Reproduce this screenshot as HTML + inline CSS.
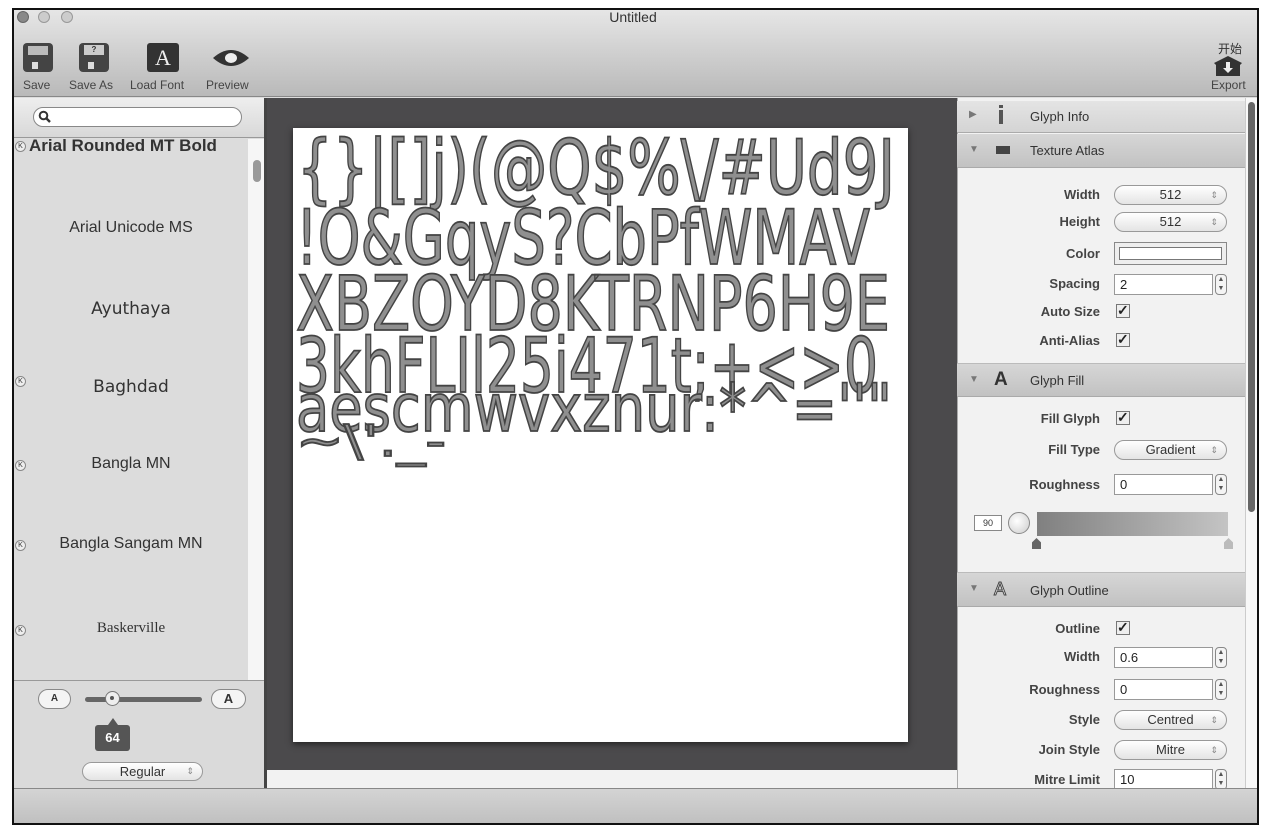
<!DOCTYPE html>
<html><head><meta charset="utf-8"><style>
*{margin:0;padding:0;box-sizing:border-box}
body{width:1266px;height:831px;background:#fff;position:relative;overflow:hidden;font-family:"Liberation Sans",sans-serif;color:#333}
.a{position:absolute}
.win{left:12px;top:8px;width:1247px;height:817px;border:2px solid #111;background:#ddd;overflow:hidden}
.lbl{position:absolute;right:166px;font-size:13px;font-weight:bold;color:#444;text-align:right;white-space:nowrap}
.fld{position:absolute;left:1114px;width:99px;height:21px;background:#fff;border:1px solid #999;font-size:13px;padding:2px 5px;color:#222}
.step{position:absolute;left:1215px;width:12px;height:21px;border:1px solid #888;border-radius:4px;background:#f4f4f4;font-size:7px;line-height:9px;text-align:center;color:#555}
.pop{position:absolute;left:1114px;width:113px;height:20px;border:1px solid #999;border-radius:10px;background:linear-gradient(#fff,#e4e4e4);font-size:13px;text-align:center;line-height:18px;color:#333}
.pop i{position:absolute;right:8px;font-style:normal;font-size:9px;color:#888}
.chk{position:absolute;left:1116px;width:14px;height:14px;border:1px solid #777;background:#eee;font-size:14px;line-height:10px;color:#222;font-weight:bold}
.hdr{position:absolute;left:957px;width:288px;background:linear-gradient(#d6d6d6,#c2c2c2);border-bottom:1px solid #aaa;font-size:13px;color:#333}
.font{position:absolute;left:14px;width:234px;text-align:center;color:#333}
.k{position:absolute;left:15px;width:11px;height:11px;border:1px solid #888;border-radius:50%;font-size:7px;line-height:9px;text-align:center;background:#eee}
</style></head><body>
<div class="a win"></div>
<div class="a" style="left:14px;top:10px;width:1243px;height:87px;background:linear-gradient(#e6e6e6,#b9b9b9);border-bottom:1px solid #888"></div>
<div class="a" style="left:17px;top:11px;width:12px;height:12px;border-radius:50%;background:#888;border:1px solid #666"></div>
<div class="a" style="left:38px;top:11px;width:12px;height:12px;border-radius:50%;background:#ccc;border:1px solid #999"></div>
<div class="a" style="left:61px;top:11px;width:12px;height:12px;border-radius:50%;background:#ccc;border:1px solid #999"></div>
<div class="a" style="left:0;top:9px;width:1266px;text-align:center;font-size:14px;color:#333">Untitled</div>
<div class="a" style="left:23px;top:43px;width:30px;height:29px;background:#444;border-radius:4px"><div class="a" style="left:5px;top:3px;width:20px;height:9px;background:#bbb"></div><div class="a" style="left:9px;top:19px;width:6px;height:7px;background:#ddd"></div></div>
<div class="a" style="left:79px;top:43px;width:30px;height:29px;background:#444;border-radius:4px"><div class="a" style="left:5px;top:2px;width:20px;height:10px;background:#ccc;font-size:8px;text-align:center;font-weight:bold;line-height:10px">?</div><div class="a" style="left:9px;top:19px;width:6px;height:7px;background:#ddd"></div></div>
<div class="a" style="left:147px;top:43px;width:32px;height:29px;background:#333;border-radius:3px;color:#eee;font-family:'Liberation Serif',serif;font-size:22px;text-align:center;line-height:29px">A</div>
<svg class="a" style="left:211px;top:46px" width="40" height="24"><path d="M2 12 Q20 -4 38 12 Q20 28 2 12Z" fill="#333"/><ellipse cx="20" cy="12" rx="6" ry="5" fill="#eee"/></svg>
<div class="a" style="left:23px;top:78px;font-size:12px;color:#444">Save</div>
<div class="a" style="left:69px;top:78px;font-size:12px;color:#444">Save As</div>
<div class="a" style="left:130px;top:78px;font-size:12px;color:#444">Load Font</div>
<div class="a" style="left:206px;top:78px;font-size:12px;color:#444">Preview</div>
<div class="a" style="left:1218px;top:40px;font-size:12px;color:#333;font-family:'Noto Sans CJK SC',sans-serif">开始</div>
<svg class="a" style="left:1213px;top:55px" width="30" height="22"><path d="M1 8 L15 1 L29 8 L27 10 L27 21 L3 21 L3 10Z" fill="#333"/><path d="M13 7 h4 v6 h3 l-5 5 l-5 -5 h3z" fill="#eee"/></svg>
<div class="a" style="left:1211px;top:78px;font-size:12px;color:#444">Export</div>
<div class="a" style="left:14px;top:98px;width:251px;height:40px;background:linear-gradient(#eee,#d8d8d8);border-bottom:1px solid #999"></div>
<div class="a" style="left:33px;top:107px;width:209px;height:20px;border:1px solid #888;border-radius:10px;background:#fff"></div>
<svg class="a" style="left:38px;top:110px" width="14" height="14"><circle cx="5.5" cy="5.5" r="3.8" stroke="#333" stroke-width="2" fill="none"/><path d="M8 8 L12 12" stroke="#333" stroke-width="2.4"/></svg>
<div class="a" style="left:14px;top:139px;width:234px;height:541px;background:#dcdcdc"></div>
<div class="a" style="left:248px;top:139px;width:16px;height:541px;background:#f6f6f6"></div>
<div class="a" style="left:253px;top:160px;width:8px;height:22px;background:#999;border-radius:4px"></div>
<div class="a" style="left:264px;top:98px;width:3px;height:690px;background:#444"></div>
<div class="k" style="top:141px">K</div>
<div class="a" style="left:29px;top:136px;font-size:17px;font-weight:bold;color:#333">Arial Rounded MT Bold</div>
<div class="font" style="top:219px;font-size:16px">Arial Unicode MS</div>
<div class="font" style="top:299px;font-size:17px;font-family:'DejaVu Sans',sans-serif">Ayuthaya</div>
<div class="k" style="top:376px">K</div><div class="font" style="top:377px;font-size:17px;font-family:'DejaVu Sans',sans-serif">Baghdad</div>
<div class="k" style="top:460px">K</div><div class="font" style="top:455px;font-size:16px">Bangla MN</div>
<div class="k" style="top:540px">K</div><div class="font" style="top:535px;font-size:16px">Bangla Sangam MN</div>
<div class="k" style="top:625px">K</div><div class="font" style="top:620px;font-size:15px;font-family:'Liberation Serif',serif">Baskerville</div>
<div class="a" style="left:14px;top:680px;width:250px;height:108px;background:#dadada;border-top:1px solid #999"></div>
<div class="a" style="left:38px;top:689px;width:33px;height:20px;border:1px solid #888;border-radius:10px;background:#f4f4f4;font-size:10px;text-align:center;line-height:18px;font-weight:bold">A</div>
<div class="a" style="left:211px;top:689px;width:35px;height:20px;border:1px solid #888;border-radius:10px;background:#f4f4f4;font-size:13px;text-align:center;line-height:18px;font-weight:bold">A</div>
<div class="a" style="left:85px;top:697px;width:117px;height:5px;border-radius:3px;background:#666"></div>
<div class="a" style="left:105px;top:691px;width:15px;height:15px;border-radius:50%;background:#eee;border:1px solid #777"></div>
<div class="a" style="left:110px;top:696px;width:4px;height:4px;border-radius:50%;background:#555"></div>
<div class="a" style="left:108px;top:718px;width:0;height:0;border-left:5px solid transparent;border-right:5px solid transparent;border-bottom:7px solid #555"></div>
<div class="a" style="left:95px;top:725px;width:35px;height:26px;background:#555;border-radius:3px;color:#fff;font-weight:bold;font-size:13px;text-align:center;line-height:26px">64</div>
<div class="a" style="left:82px;top:762px;width:121px;height:19px;border:1px solid #999;border-radius:10px;background:linear-gradient(#fff,#e4e4e4);font-size:13px;text-align:center;line-height:17px">Regular<span style="position:absolute;right:8px;font-size:9px;color:#888">⇕</span></div>
<div class="a" style="left:267px;top:98px;width:690px;height:672px;background:#4b4a4c"></div>
<div class="a" style="left:267px;top:770px;width:690px;height:18px;background:#f2f2f2"></div>
<div class="a" style="left:293px;top:128px;width:615px;height:614px;background:#fff;box-shadow:0 2px 6px #222"></div>
<svg class="a" style="left:293px;top:128px" width="615" height="340">
<g font-family="DejaVu Sans,sans-serif" fill="#8f8f8f" stroke="#444" stroke-width="1.8" font-size="76">
<text x="4" y="66" textLength="598" lengthAdjust="spacingAndGlyphs">{}|[]j)(@Q$%\/#Ud9J</text>
<text x="3" y="136" textLength="574" lengthAdjust="spacingAndGlyphs">!O&amp;GqyS?CbPfWMAV</text>
<text x="3" y="202" textLength="594" lengthAdjust="spacingAndGlyphs">XBZOYD8KTRNP6H9E</text>
<text x="3" y="264" textLength="582" lengthAdjust="spacingAndGlyphs">3khFLIl25i471t;+&lt;&gt;0</text>
<text x="3" y="303" font-size="66" textLength="596" lengthAdjust="spacingAndGlyphs">aescmwvxznur:*^=''"</text>
<text x="3" y="328" font-size="44" textLength="150" lengthAdjust="spacingAndGlyphs">~\'._-</text>
</g></svg>
<div class="a" style="left:957px;top:98px;width:300px;height:690px;background:#f2f2f2;border-left:1px solid #aaa"></div>
<div class="a" style="left:1245px;top:98px;width:12px;height:690px;background:#f8f8f8;border-left:1px solid #ccc"></div>
<div class="a" style="left:1248px;top:102px;width:7px;height:410px;background:#666;border-radius:4px"></div>
<div class="hdr" style="top:101px;height:32px;background:linear-gradient(#e4e4e4,#d4d4d4)"><span class="a" style="left:12px;top:8px;font-size:10px;color:#777">▶</span><span class="a" style="left:42px;top:9px;width:4px;height:14px;background:#555"></span><span class="a" style="left:42px;top:4px;width:4px;height:3px;background:#555"></span><span class="a" style="left:73px;top:8px">Glyph Info</span></div>
<div class="hdr" style="top:134px;height:34px"><span class="a" style="left:12px;top:10px;font-size:10px;color:#777">▼</span><span class="a" style="left:39px;top:12px;width:14px;height:8px;background:#444"></span><span class="a" style="left:73px;top:9px">Texture Atlas</span></div>
<div class="lbl" style="top:187px">Width</div><div class="pop" style="top:185px">512<i>⇕</i></div>
<div class="lbl" style="top:214px">Height</div><div class="pop" style="top:212px">512<i>⇕</i></div>
<div class="lbl" style="top:246px">Color</div><div class="a" style="left:1114px;top:242px;width:113px;height:23px;border:1px solid #888;background:#eee"><div class="a" style="left:4px;top:4px;width:103px;height:13px;background:#fff;border:1px solid #777"></div></div>
<div class="lbl" style="top:276px">Spacing</div><div class="fld" style="top:274px">2</div><div class="step" style="top:274px">▲<br>▼</div>
<div class="lbl" style="top:304px">Auto Size</div><div class="chk" style="top:304px">✓</div>
<div class="lbl" style="top:333px">Anti-Alias</div><div class="chk" style="top:333px">✓</div>
<div class="hdr" style="top:363px;height:34px;border-top:1px solid #bbb"><span class="a" style="left:12px;top:10px;font-size:10px;color:#777">▼</span><span class="a" style="left:37px;top:5px;font-size:19px;font-weight:bold;color:#333">A</span><span class="a" style="left:73px;top:9px">Glyph Fill</span></div>
<div class="lbl" style="top:411px">Fill Glyph</div><div class="chk" style="top:411px">✓</div>
<div class="lbl" style="top:442px">Fill Type</div><div class="pop" style="top:440px">Gradient<i>⇕</i></div>
<div class="lbl" style="top:477px">Roughness</div><div class="fld" style="top:474px">0</div><div class="step" style="top:474px">▲<br>▼</div>
<div class="a" style="left:974px;top:515px;width:28px;height:16px;border:1px solid #888;background:#fff;font-size:9px;text-align:center;line-height:14px">90</div>
<div class="a" style="left:1008px;top:512px;width:22px;height:22px;border-radius:50%;border:1px solid #888;background:radial-gradient(circle at 40% 40%,#fff,#ccc)"></div>
<div class="a" style="left:1037px;top:512px;width:191px;height:24px;background:linear-gradient(90deg,#808080,#c4c4c4)"></div>
<div class="a" style="left:1032px;top:538px;width:9px;height:11px;background:#666;clip-path:polygon(50% 0,100% 40%,100% 100%,0 100%,0 40%)"></div>
<div class="a" style="left:1224px;top:538px;width:9px;height:11px;background:#bbb;clip-path:polygon(50% 0,100% 40%,100% 100%,0 100%,0 40%)"></div>
<div class="hdr" style="top:572px;height:35px;border-top:1px solid #bbb"><span class="a" style="left:12px;top:10px;font-size:10px;color:#777">▼</span><span class="a" style="left:37px;top:6px;font-size:18px;color:#eee;-webkit-text-stroke:1px #444">A</span><span class="a" style="left:73px;top:10px">Glyph Outline</span></div>
<div class="lbl" style="top:621px">Outline</div><div class="chk" style="top:621px">✓</div>
<div class="lbl" style="top:649px">Width</div><div class="fld" style="top:647px">0.6</div><div class="step" style="top:647px">▲<br>▼</div>
<div class="lbl" style="top:682px">Roughness</div><div class="fld" style="top:679px">0</div><div class="step" style="top:679px">▲<br>▼</div>
<div class="lbl" style="top:712px">Style</div><div class="pop" style="top:710px">Centred<i>⇕</i></div>
<div class="lbl" style="top:742px">Join Style</div><div class="pop" style="top:740px">Mitre<i>⇕</i></div>
<div class="lbl" style="top:772px">Mitre Limit</div><div class="fld" style="top:769px">10</div><div class="step" style="top:769px">▲<br>▼</div>
<div class="a" style="left:14px;top:788px;width:1243px;height:35px;background:linear-gradient(#d4d4d4,#c0c0c0);border-top:1px solid #888"></div>
<div class="a" style="left:12px;top:8px;width:1247px;height:817px;border:2px solid #111"></div>
</body></html>
